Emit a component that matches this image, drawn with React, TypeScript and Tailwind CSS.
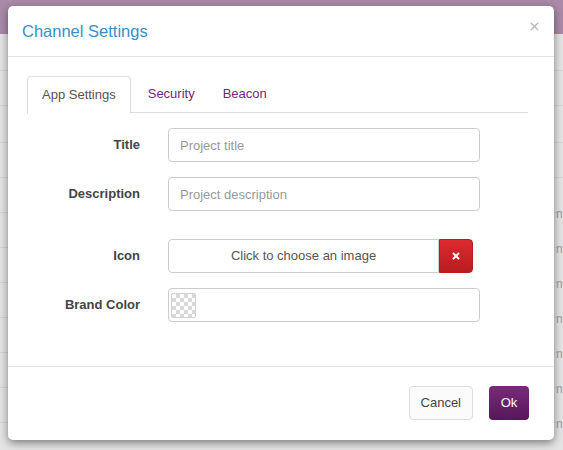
import { X } from 'lucide-react'

const rows = [70, 105, 142, 177, 212, 247, 282, 317, 352, 387, 422]

function Field({ label, children }: { label: string; children: React.ReactNode }) {
  return (
    <div className="flex items-center">
      <label className="w-[113px] text-right font-bold text-[13px] text-[#444]">{label}</label>
      <div className="ml-[28px] flex">{children}</div>
    </div>
  )
}

export default function App() {
  return (
    <div
      className="relative w-[563px] h-[450px] overflow-hidden bg-[#e4e4e4]"
      style={{ fontFamily: '"Liberation Sans", Arial, sans-serif' }}
    >
      {/* page behind the modal */}
      <div className="h-[34px] bg-[#a98aa9]" />
      {rows.map((y) => (
        <div key={y} className="absolute left-0 right-0 h-px bg-[#d6d6d6]" style={{ top: y }} />
      ))}
      {[213, 248, 283, 318, 353, 388, 423].map((y) => (
        <span key={y} className="absolute left-[556px] text-[12px] text-[#a0a0a0]" style={{ top: y - 8 }}>
          n
        </span>
      ))}

      {/* modal */}
      <div className="absolute left-[8px] top-[6px] w-[546px] h-[434px] bg-white rounded-[5px] shadow-[0_3px_8px_rgba(0,0,0,0.45)] flex flex-col">
        <div className="h-[51px] flex items-center justify-between pl-[14px] pr-[13px] border-b border-[#e5e5e5]">
          <h4 className="text-[16.5px] text-[#3b8fc4] mt-[1px]">Channel Settings</h4>
          <X className="w-[13px] h-[13px] text-[#bdbdbd] -mt-[9px]" strokeWidth={3} />
        </div>

        <div className="flex-1 px-[19px] pt-[19px]">
          <div className="flex border-b border-[#dddddd] mr-[7px] h-[37px] text-[13px]">
            <div className="px-[14px] h-[38px] flex items-center bg-white border border-[#dddddd] border-b-white rounded-t-[4px] text-[#555]">
              App Settings
            </div>
            <div className="px-[17px] flex items-center text-[#6d2b73]">Security</div>
            <div className="px-[11px] flex items-center text-[#6d2b73]">Beacon</div>
          </div>

          <div className="flex flex-col mt-[15px]">
            <Field label="Title">
              <input
                className="w-[312px] h-[34px] border border-[#cccccc] rounded-[4px] px-[11px] text-[13px] placeholder-[#999] outline-none"
                placeholder="Project title"
              />
            </Field>
            <div className="mt-[15px]">
              <Field label="Description">
                <input
                  className="w-[312px] h-[34px] border border-[#cccccc] rounded-[4px] px-[11px] text-[13px] placeholder-[#999] outline-none"
                  placeholder="Project description"
                />
              </Field>
            </div>
            <div className="mt-[28px]">
              <Field label="Icon">
                <div className="w-[271px] h-[34px] border border-[#cccccc] rounded-l-[4px] flex items-center justify-center text-[13px] text-[#555]">
                  Click to choose an image
                </div>
                <div className="w-[34px] h-[34px] rounded-r-[4px] bg-gradient-to-b from-[#dd2a2f] to-[#b81c20] border border-[#b51d20] flex items-center justify-center">
                  <X className="w-[10px] h-[10px] text-white" strokeWidth={4.5} />
                </div>
              </Field>
            </div>
            <div className="mt-[15px]">
              <Field label="Brand Color">
                <div className="w-[312px] h-[34px] border border-[#cccccc] rounded-[4px] flex items-center pl-[2px]">
                  <div
                    className="w-[25px] h-[25px] rounded-[2px] border border-[#d0d0d0]"
                    style={{
                      backgroundColor: '#fff',
                      backgroundImage:
                        'linear-gradient(45deg,#d9d9d9 25%,transparent 25%,transparent 75%,#d9d9d9 75%),linear-gradient(45deg,#d9d9d9 25%,transparent 25%,transparent 75%,#d9d9d9 75%)',
                      backgroundSize: '8px 8px',
                      backgroundPosition: '0 0,4px 4px',
                    }}
                  />
                </div>
              </Field>
            </div>
          </div>
        </div>

        <div className="h-[74px] border-t border-[#e5e5e5] flex items-start justify-end gap-[16px] pr-[25px] pt-[19px]">
          <button className="h-[34px] px-[11px] border border-[#dddddd] rounded-[4px] bg-[#fbfbfb] text-[13px] text-[#444]">
            Cancel
          </button>
          <button className="h-[34px] w-[40px] rounded-[4px] bg-gradient-to-b from-[#7a2a7e] to-[#561858] text-[13px] text-white">
            Ok
          </button>
        </div>
      </div>
    </div>
  )
}
